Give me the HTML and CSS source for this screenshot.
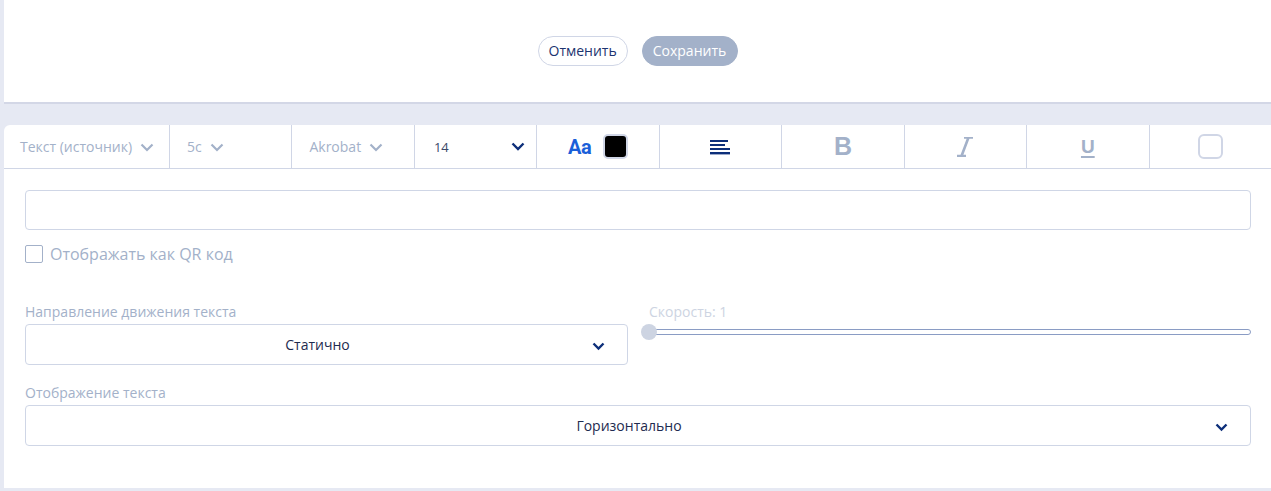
FILE: index.html
```html
<!DOCTYPE html>
<html lang="ru">
<head>
<meta charset="utf-8">
<link rel="stylesheet" href="styles.css">
</head>
<body>
<div class="top">
  <button class="btn btn-cancel">Отменить</button>
  <button class="btn btn-save">Сохранить</button>
</div>
<div class="card">
  <div class="toolbar">
    <div class="tool tool-first"><span>Текст (источник)</span><svg class="chev" width="14" height="9" viewBox="0 0 14 9"><path d="M1.5 1.5l5.5 5.5 5.5-5.5" fill="none" stroke="#a3b1c9" stroke-width="2.2"/></svg></div>
    <div class="tool"><span>5c</span><svg class="chev" width="14" height="9" viewBox="0 0 14 9"><path d="M1.5 1.5l5.5 5.5 5.5-5.5" fill="none" stroke="#a3b1c9" stroke-width="2.2"/></svg></div>
    <div class="tool"><span>Akrobat</span><svg class="chev" width="14" height="9" viewBox="0 0 14 9"><path d="M1.5 1.5l5.5 5.5 5.5-5.5" fill="none" stroke="#a3b1c9" stroke-width="2.2"/></svg></div>
    <div class="tool tool-size"><span>14</span><svg width="14" height="9" viewBox="0 0 14 9"><path d="M1.5 1.5l5.5 5.5 5.5-5.5" fill="none" stroke="#0d2f7a" stroke-width="2.4"/></svg></div>
    <div class="tool tool-center"><span class="aa">Aa</span><span class="swatch"></span></div>
    <div class="tool tool-center"><svg width="20" height="16" viewBox="0 0 20 16"><rect x="0" y="1" width="18" height="2" fill="#0d2f7a"/><rect x="0" y="5" width="15" height="2" fill="#0d2f7a"/><rect x="0" y="9" width="20" height="2" fill="#0d2f7a"/><rect x="0" y="13" width="20" height="2.4" fill="#0d2f7a"/></svg></div>
    <div class="tool tool-center"><span class="bold">B</span></div>
    <div class="tool tool-center"><svg width="18" height="20" viewBox="0 0 18 20"><path d="M8 0.5h9M1 19h9M12.5 0.5L5.5 19" fill="none" stroke="#a3b1c9" stroke-width="2.6"/></svg></div>
    <div class="tool tool-center"><span class="under">U</span></div>
    <div class="tool tool-center"><span class="box"></span></div>
  </div>
  <div class="content">
    <div class="input"></div>
    <label class="check"><span class="checkbox"></span><span>Отображать как QR код</span></label>
    <div class="row">
      <div class="field">
        <div class="label">Направление движения текста</div>
        <div class="select"><span>Статично</span><svg class="sel-chev" width="13" height="9" viewBox="0 0 13 9"><path d="M1.5 1.5l5 5 5-5" fill="none" stroke="#0d2f7a" stroke-width="2.4"/></svg></div>
      </div>
      <div class="field speed">
        <div class="label label-light">Скорость: 1</div>
        <div class="slider"><span class="track"></span><span class="thumb"></span></div>
      </div>
    </div>
    <div class="field">
      <div class="label">Отображение текста</div>
      <div class="select"><span>Горизонтально</span><svg class="sel-chev" width="13" height="9" viewBox="0 0 13 9"><path d="M1.5 1.5l5 5 5-5" fill="none" stroke="#0d2f7a" stroke-width="2.4"/></svg></div>
    </div>
  </div>
</div>
</body>
</html>
```
FILE: styles.css
```css
* { box-sizing: border-box; }
html, body { margin: 0; padding: 0; }
body {
  background: #e6e9f3;
  font-family: "Open Sans", "Noto Sans", sans-serif;
  font-size: 14px;
  color: #1e2b4f;
  padding-left: 4px;
  height: 491px;
  overflow: hidden;
}
.top {
  background: #fff;
  height: 104px;
  border-bottom: 2px solid #d3d7e6;
  display: flex;
  justify-content: center;
  align-items: flex-start;
  gap: 14px;
  padding-top: 36px;
}
.btn {
  font-family: "Open Sans", sans-serif;
  font-size: 14px;
  height: 30px;
  border-radius: 15px;
  padding: 0 10px;
  line-height: 28px;
}
.btn-cancel {
  background: #fff;
  border: 1px solid #d0d6e6;
  color: #1c3470;
  width: 90px;
}
.btn-save {
  background: #a3b1c9;
  border: 1px solid #a3b1c9;
  color: #fff;
  width: 96px;
}
.card {
  margin-top: 21px;
  background: #fff;
  border-top-left-radius: 6px;
  height: 363px;
}
.toolbar {
  display: grid;
  grid-template-columns: 165px repeat(9, minmax(0, 1fr));
  height: 44px;
  border-bottom: 1px solid #d0d6e6;
}
.tool {
  display: flex;
  align-items: center;
  gap: 8px;
  padding-left: 17px;
  border-left: 1px solid #d0d6e6;
  color: #a3b1c9;
  font-size: 14px;
  white-space: nowrap;
}
.tool-first {
  border-left: none;
  padding-left: 16px;
}
.chev { margin-top: 1px; }
.tool-size {
  color: #3a4a6a;
  justify-content: space-between;
  padding-left: 19px;
  padding-right: 11px;
  font-size: 13px;
}
.tool-center {
  justify-content: center;
  padding-left: 0;
  gap: 12px;
}
.aa {
  font-family: Roboto, "Liberation Sans", sans-serif;
  font-weight: 700;
  font-size: 20px;
  color: #1a5fd9;
  letter-spacing: -0.5px;
  margin-top: 1px;
}
.swatch {
  width: 25px;
  height: 25px;
  background: #000;
  border: 2px solid #d0d6e6;
  border-radius: 5px;
}
.bold {
  font-family: "Liberation Sans", Arial, sans-serif;
  font-weight: 700;
  font-size: 25px;
  color: #a3b1c9;
  line-height: 1;
}
.under {
  font-family: "Liberation Sans", Arial, sans-serif;
  font-weight: 700;
  font-size: 19px;
  color: #a3b1c9;
  text-decoration: underline;
  text-decoration-thickness: 2px;
  text-underline-offset: 3px;
  line-height: 1;
}
.box {
  width: 25px;
  height: 25px;
  border: 2px solid #d0d6e6;
  border-radius: 6px;
}
.content {
  padding: 21px 20px 0 21px;
}
.input {
  height: 40px;
  border: 1px solid #cfd6e6;
  border-radius: 4px;
}
.check {
  display: flex;
  align-items: center;
  gap: 7px;
  margin-top: 15px;
  font-size: 16px;
  color: #a3b1c9;
  height: 18px;
}
.checkbox {
  width: 18px;
  height: 18px;
  border: 1px solid #a3b1c9;
  border-radius: 2px;
}
.row {
  display: grid;
  grid-template-columns: 603fr 610fr;
  gap: 13px;
  margin-top: 39px;
}
.field { margin-bottom: 18px; }
.label {
  font-size: 14px;
  color: #a3b1c9;
  line-height: 19px;
  margin-bottom: 3px;
}
.label-light {
  color: #cdd4e2;
  padding-left: 8px;
}
.select {
  position: relative;
  height: 41px;
  border: 1px solid #cfd6e6;
  border-radius: 4px;
  display: flex;
  align-items: center;
  justify-content: center;
  padding-right: 18px;
  font-size: 14px;
  color: #1e2b4f;
}
.sel-chev {
  position: absolute;
  right: 22px;
  top: 17px;
}
.slider {
  position: relative;
  height: 16px;
  margin-top: 1px;
}
.track {
  position: absolute;
  left: 8px;
  right: 0;
  top: 5px;
  height: 6px;
  border: 1px solid #8a9cc4;
  border-radius: 0 3px 3px 0;
}
.thumb {
  position: absolute;
  left: 0;
  top: 0;
  width: 16px;
  height: 16px;
  border-radius: 50%;
  background: #cdd4e2;
}
```
